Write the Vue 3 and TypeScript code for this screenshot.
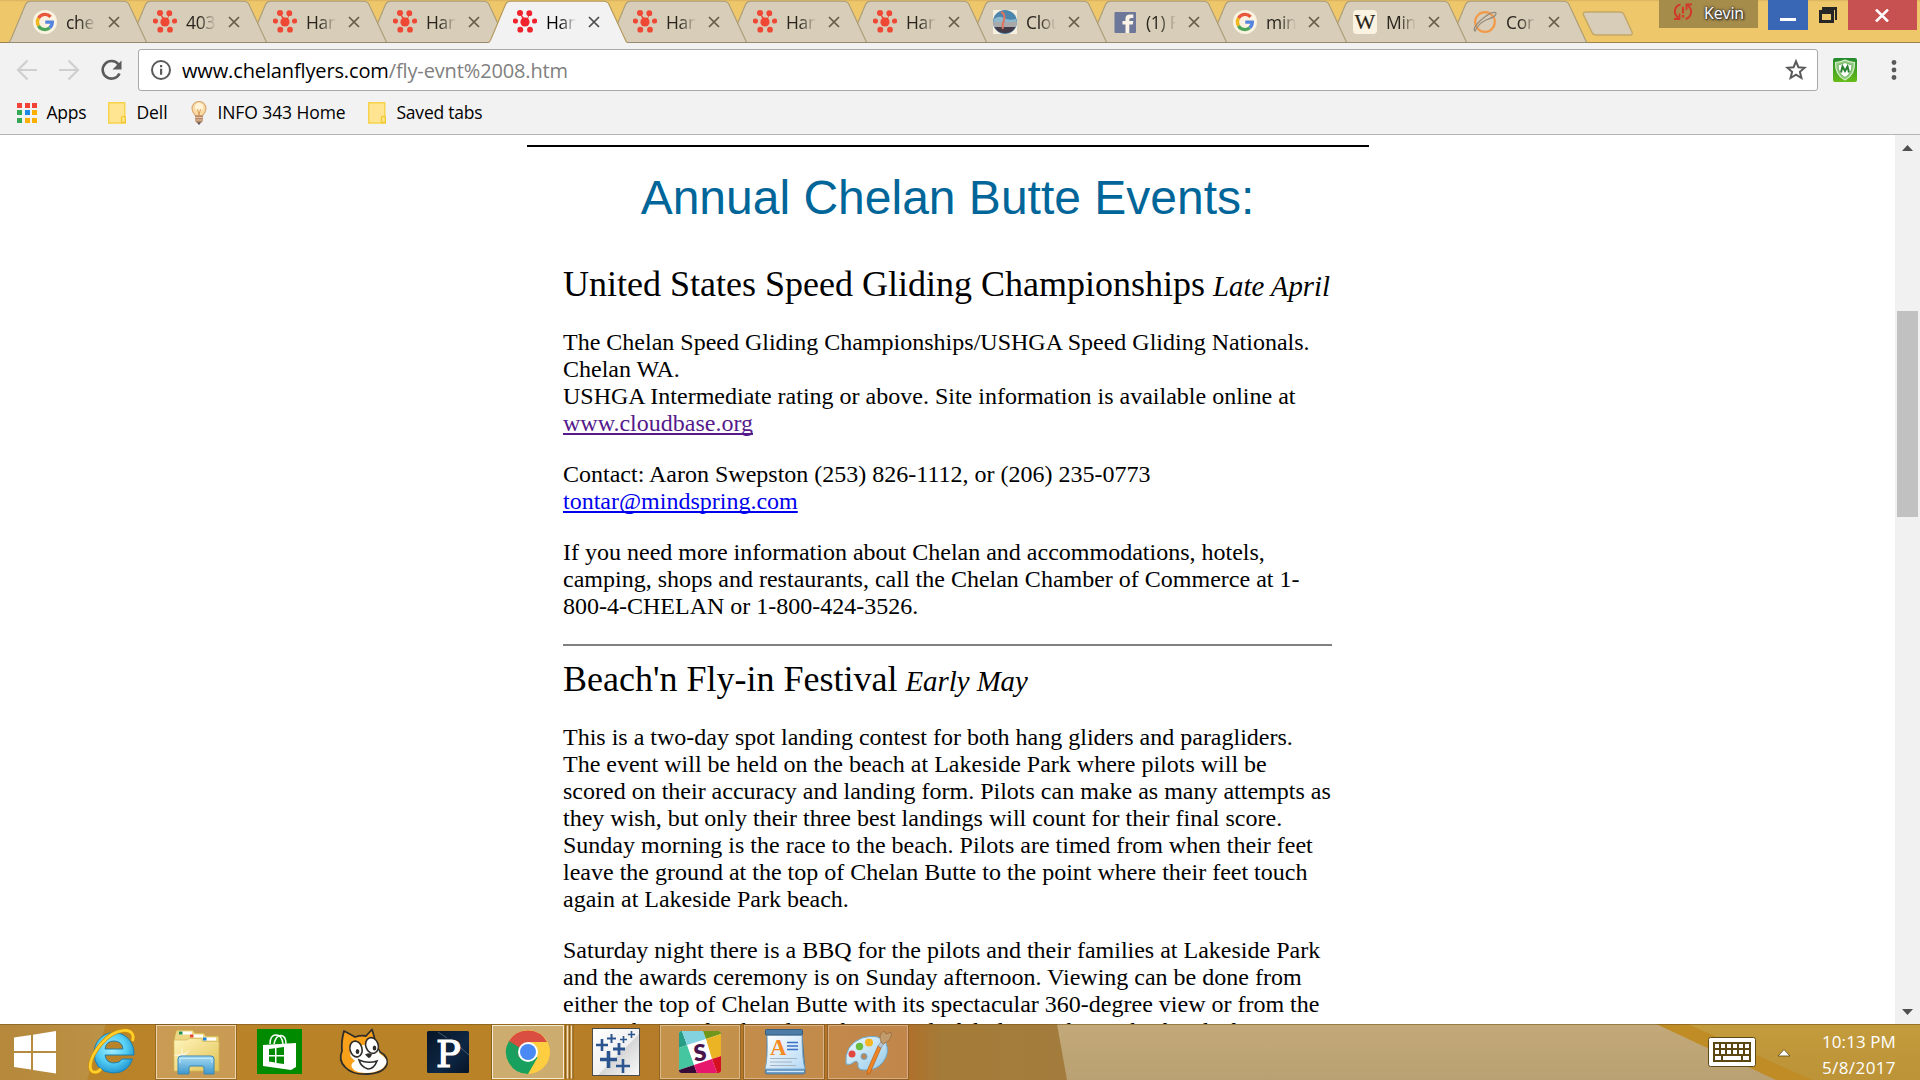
<script setup lang="ts">
import type { Directive } from 'vue'

interface Tab {
  title: string
  icon: 'google' | 'burst' | 'cloud' | 'facebook' | 'wiki' | 'planet'
  active?: boolean
}

const tabs: Tab[] = [
  { title: 'che', icon: 'google' },
  { title: '403', icon: 'burst' },
  { title: 'Han', icon: 'burst' },
  { title: 'Han', icon: 'burst' },
  { title: 'Han', icon: 'burst', active: true },
  { title: 'Han', icon: 'burst' },
  { title: 'Han', icon: 'burst' },
  { title: 'Han', icon: 'burst' },
  { title: 'Clou', icon: 'cloud' },
  { title: '(1) F', icon: 'facebook' },
  { title: 'min', icon: 'google' },
  { title: 'Min', icon: 'wiki' },
  { title: 'Cor', icon: 'planet' },
]

const appDots = ['#f44336', '#f44336', '#f44336', '#34a853', '#1e88e5', '#fbb003', '#34a853', '#fbb003', '#fbb003']

const sparks = [
  { x: 28, y: 21, r: 6, w: 2.6 },
  { x: 37.5, y: 14.5, r: 4.5, w: 2 },
  { x: 49.5, y: 15.5, r: 3.5, w: 1.6 },
  { x: 57.5, y: 10.5, r: 3.6, w: 1.6 },
  { x: 45, y: 25, r: 6, w: 2.8 },
  { x: 34.5, y: 35.5, r: 8.5, w: 3.6 },
  { x: 49, y: 42, r: 7, w: 2.6 },
]

// Tracks a label out (or in) so that it takes exactly the given width.
const vFit: Directive<HTMLElement, number> = {
  mounted(el, { value }) {
    const n = (el.textContent ?? '').length
    const w = el.getBoundingClientRect().width
    if (n > 0) el.style.letterSpacing = `${((value - w) / n).toFixed(3)}px`
  },
}
</script>

<template>
  <div class="screen">
    <header class="strip">
      <div class="tabs">
        <div v-for="(tab, i) in tabs" :key="i" class="tab" :class="{ active: tab.active }" :style="{ zIndex: tab.active ? 40 : 30 - i }">
          <svg class="shape" width="140" height="43" viewBox="0 0 140 43">
            <path d="M0.5 43 C2 42 2.5 40 3.5 38 L17.5 4.5 Q19 1 22 1 H116 Q119.500 1 121 4.500 L137 39 Q138 42 139.500 43 Z" :fill="tab.active ? '#f2f2f2' : '#d7cdb8'" />
            <path d="M0.5 42.500 C2 42 2.500 40 3.500 38 L17.500 4.500 Q19 1.300 22 1.300 H116 Q119.500 1.300 121 4.500 L137 39 Q138 42 139.500 42.500" fill="none" :stroke="tab.active ? '#b49758' : '#aa9c78'" stroke-width="1.100" />
            <path v-if="!tab.active" d="M0 42.500 H140" stroke="#97896d" />
          </svg>
          <svg class="fav" width="24" height="24" viewBox="0 0 24 24">
            <g v-if="tab.icon === 'google'">
              <circle cx="12" cy="12" r="12" fill="#fbf3e2" />
              <g fill="none" stroke-width="3.300">
                <path d="M17.600 6.800 A7.500 7.500 0 0 0 5.500 8.200" stroke="#e8573c" />
                <path d="M5.500 8.200 A7.500 7.500 0 0 0 5.500 15.800" stroke="#f2b51d" />
                <path d="M5.500 15.800 A7.500 7.500 0 0 0 16.800 17.800" stroke="#4ba657" />
                <path d="M16.800 17.800 A7.500 7.500 0 0 0 19.300 12.100 H12.300" stroke="#5484dc" />
              </g>
            </g>
            <g v-else-if="tab.icon === 'burst'" :fill="tab.active ? '#f0222b' : '#f04634'">
              <circle cx="12" cy="12" r="4.600" />
              <path d="M6 2 L10 10 L12 9 Z M12 12 L17 3 L14 12 Z" />
              <circle cx="7" cy="3" r="3" /><circle cx="16.300" cy="3.200" r="2.900" />
              <circle cx="2.400" cy="11" r="2.600" /><circle cx="21.600" cy="11" r="2.600" />
              <circle cx="7.300" cy="19.700" r="2.900" /><circle cx="17" cy="19.700" r="2.900" />
            </g>
            <g v-else-if="tab.icon === 'cloud'">
              <rect width="24" height="24" fill="#f7efdf" />
              <circle cx="12" cy="12" r="12" fill="#4d86ad" />
              <path d="M1 9 Q6 5 11 8 T23 9 L24 13 H0Z" fill="#8fb7cb" />
              <path d="M0 12 H24 A12 12 0 0 1 22.500 17 H1.500 A12 12 0 0 1 0 12Z" fill="#a9a9ac" />
              <path d="M1.500 17 H22.500 A12 12 0 0 1 1.500 17Z" fill="#443b49" />
              <path d="M8 2 Q13 4 11 10 T10 19" fill="none" stroke="#e0715c" stroke-width="2" />
            </g>
            <g v-else-if="tab.icon === 'facebook'">
              <rect x="1.500" y="2" width="21.500" height="21" rx="1" fill="#6d7799" />
              <path d="M12.500 23 V14.500 H9.500 V11 H12.500 V8.500 Q12.500 4.500 17 4.500 H20.300 V8 H18 Q16.300 8 16.300 9.500 V11 H20.300 L19.800 14.500 H16.300 V23Z" fill="#fbf4e6" />
            </g>
            <g v-else-if="tab.icon === 'wiki'">
              <rect width="24" height="24" rx="4" fill="#fbf3e2" />
              <text x="12" y="19" text-anchor="middle" class="wiki-w">W</text>
            </g>
            <g v-else fill="none">
              <circle cx="12" cy="12" r="9.800" stroke="#f2994a" stroke-width="2.200" />
              <path d="M2 21 Q-1 18 8 10 Q18 1 22.500 2.500 Q25 6 13 10 Q5 14 2 21Z" stroke="#978c7c" stroke-width="1.300" />
            </g>
          </svg>
          <span class="tab-title">{{ tab.title }}</span>
          <svg class="close" width="12" height="12" viewBox="0 0 12 12"><path d="M1 1 L11 11 M11 1 L1 11" fill="none" :stroke="tab.active ? '#4c4c4c' : '#675d47'" stroke-width="1.700" /></svg>
        </div>
      </div>
      <svg class="new-tab" width="52" height="26" viewBox="0 0 52 26">
        <path d="M4 2 H38 Q41 2 42 4.500 L50 22 Q51 25 48 25 H14 Q11 25 10 22.500 L1.500 5 Q0.500 2 4 2Z" fill="#d7cdb8" stroke="#c4a868" stroke-width="1.500" />
      </svg>
      <div class="controls">
        <div class="user">
          <svg width="20" height="18" viewBox="0 0 20 18" fill="none" stroke="#d2392a" stroke-width="2">
            <path d="M7.500 1.500 C1 3 0 11 5.500 15 M12.500 16 C19 14 20 6 14.500 2.500" />
            <path d="M6.500 10.500 V16 H1 M13.500 7 V1.500 H19" stroke-width="1.800" />
            <path d="M10 4 V10.500 M10 12 V14.500" stroke-width="2.200" />
          </svg>
          <span v-fit="40">Kevin</span>
        </div>
        <div class="min"><i></i></div>
        <svg class="restore" width="40" height="30" viewBox="0 0 40 30"><path d="M14 7 H29 V20 H27 V10 H14Z M11 10 H26 V23 H11Z M14 14 V20 H23 V14Z" fill="#262626" fill-rule="evenodd" /></svg>
        <div class="x"><svg width="14" height="13" viewBox="0 0 14 13"><path d="M1 .500 L13 12.500 M13 .500 L1 12.500" stroke="#fff" stroke-width="2.500" /></svg></div>
      </div>
    </header>

    <div class="toolbar">
      <svg class="nav" width="138" height="56" viewBox="0 0 138 56" fill="none">
        <path d="M37 27 H18.500 M27.500 17.500 L18 27 L27.500 36.500" stroke="#cfcfcf" stroke-width="2.200" />
        <path d="M59 27 H77.500 M68.500 17.500 L78 27 L68.500 36.500" stroke="#cfcfcf" stroke-width="2.200" />
        <path d="M118.500 21.500 A8.800 8.800 0 1 0 119.500 30.500" stroke="#5a5a5a" stroke-width="2.600" />
        <path d="M121.500 17.500 V26.500 H112.500 Z" fill="#5a5a5a" />
      </svg>
      <div class="omnibox">
        <svg class="info" width="20" height="20" viewBox="0 0 20 20"><circle cx="10" cy="10" r="9" fill="none" stroke="#5a5a5a" stroke-width="2" /><path d="M9 8.700 h2.200 v6 h-2.200z M9 5 h2.200 v2.300 h-2.200z" fill="#5a5a5a" /></svg>
        <span v-fit="386" class="url">www.chelanflyers.com<span>/fly-evnt%2008.htm</span></span>
        <svg class="star" width="22" height="22" viewBox="0 0 22 22"><path d="M11 2.300 L13.400 8.200 L19.700 8.700 L14.900 12.800 L16.400 19 L11 15.700 L5.600 19 L7.100 12.800 L2.300 8.700 L8.600 8.200Z" fill="none" stroke="#5a5a5a" stroke-width="2" /></svg>
      </div>
      <svg class="shield" width="24" height="24" viewBox="0 0 24 24">
        <defs><linearGradient id="sg" x2="0" y2="1"><stop stop-color="#238a2e" /><stop offset="1" stop-color="#66bd18" /></linearGradient></defs>
        <rect width="24" height="24" rx="2" fill="url(#sg)" />
        <path d="M2.500 4.500 Q8 4 12 2 Q16 4 21.500 4.500 Q22 17 12 22 Q2 17 2.500 4.500Z" fill="#8ecb7c" stroke="#d9edce" stroke-width="1.200" />
        <path d="M5 7 Q9 6 12 4.500 Q15 6 19 7 Q19 15.500 12 19.500 Q5 15.500 5 7Z" fill="#fff" stroke="#76b969" />
        <path d="M8 14.500 L9.500 8.500 L12 13 L14.500 8.500 L16 14.500" fill="none" stroke="#287f2d" stroke-width="2" />
      </svg>
      <svg class="dots" width="6" height="20" viewBox="0 0 6 20" fill="#5a5a5a"><circle cx="3" cy="2.500" r="2.400" /><circle cx="3" cy="10" r="2.400" /><circle cx="3" cy="17.500" r="2.400" /></svg>
    </div>

    <div class="bookmarks">
      <div class="bm apps">
        <div class="grid"><i v-for="(c, i) in appDots" :key="i" :style="{ background: c }"></i></div>
        <span v-fit="40">Apps</span>
      </div>
      <div class="bm dell">
        <svg width="18" height="22" viewBox="0 0 18 22"><path d="M.700 .700 H16.800 V15 H17.500 V21 H.700Z" fill="#ffe591" stroke="#f6d34b" stroke-width="1.400" /><path d="M13.500 20.500 V16 Q13.500 14.300 15.500 14.300 Q17.300 14.300 17.300 16 V20.500Z" fill="#ffe591" stroke="#f2c72f" stroke-width="1.300" /></svg>
        <span v-fit="31">Dell</span>
      </div>
      <div class="bm info343">
        <svg width="16" height="24" viewBox="0 0 16 24"><path d="M4.500 14.500 Q1 11 1 7.500 A7 7 0 0 1 15 7.500 Q15 11 11.500 14.500Z" fill="#fbdca6" stroke="#d9a972" stroke-width="1.200" /><ellipse cx="8" cy="6" rx="4" ry="4" fill="#fff4d8" /><path d="M6.500 8 L8 14 L9.500 8" fill="none" stroke="#d89c5a" /><path d="M4 14.500 H12 V20 L10 22 H6 L4 20Z" fill="#b98a69" /><path d="M4 16.500 H12 M4 19 H12" stroke="#e4c3a4" /><path d="M6 21.500 H10 L8 24Z" fill="#555" /></svg>
        <span v-fit="128">INFO 343 Home</span>
      </div>
      <div class="bm saved">
        <svg width="18" height="22" viewBox="0 0 18 22"><path d="M.700 .700 H16.800 V15 H17.500 V21 H.700Z" fill="#ffe591" stroke="#f6d34b" stroke-width="1.400" /><path d="M13.500 20.500 V16 Q13.500 14.300 15.500 14.300 Q17.300 14.300 17.300 16 V20.500Z" fill="#ffe591" stroke="#f2c72f" stroke-width="1.300" /></svg>
        <span v-fit="86">Saved tabs</span>
      </div>
    </div>

    <div class="viewport">
      <main class="page">
        <div class="rule"></div>
        <h1>Annual Chelan Butte Events:</h1>
        <article>
          <h2>United States Speed Gliding Championships <em>Late April</em></h2>
          <p>The Chelan Speed Gliding Championships/USHGA Speed Gliding Nationals.<br>Chelan WA.<br>USHGA Intermediate rating or above. Site information is available online at <a class="visited">www.cloudbase.org</a></p>
          <p>Contact: Aaron Swepston (253) 826-1112, or (206) 235-0773<br><a>tontar@mindspring.com</a></p>
          <p>If you need more information about Chelan and accommodations, hotels, camping, shops and restaurants, call the Chelan Chamber of Commerce at 1-<wbr>800-4-CHELAN or 1-800-424-3526.</p>
          <hr>
          <h2>Beach'n Fly-in Festival <em>Early May</em></h2>
          <p>This is a two-day spot landing contest for both hang gliders and paragliders. The event will be held on the beach at Lakeside Park where pilots will be scored on their accuracy and landing form. Pilots can make as many attempts as they wish, but only their three best landings will count for their final score. Sunday morning is the race to the beach. Pilots are timed from when their feet leave the ground at the top of Chelan Butte to the point where their feet touch again at Lakeside Park beach.</p>
          <p>Saturday night there is a BBQ for the pilots and their families at Lakeside Park and the awards ceremony is on Sunday afternoon. Viewing can be done from either the top of Chelan Butte with its spectacular 360-degree view or from the green shores of Lakeside Park, a wonderful place to bring the family for</p>
        </article>
      </main>
      <div class="scroll">
        <svg width="25" height="25" viewBox="0 0 25 25"><path d="M7 16 L12.500 10 L18 16Z" fill="#505050" /></svg>
        <div class="thumb"></div>
        <svg class="down" width="25" height="25" viewBox="0 0 25 25"><path d="M7 10 L12.500 16 L18 10Z" fill="#505050" /></svg>
      </div>
    </div>

    <footer class="taskbar">
      <svg class="wall" width="1920" height="56" viewBox="0 0 1920 56" preserveAspectRatio="none">
        <defs>
          <linearGradient id="w1"><stop stop-color="#b5883b" /><stop offset="1" stop-color="#bc9246" /></linearGradient>
          <linearGradient id="w2"><stop stop-color="#b9832b" /><stop offset=".450" stop-color="#b98226" /><stop offset=".800" stop-color="#b1742b" /><stop offset=".850" stop-color="#af712b" /><stop offset=".880" stop-color="#a47b38" /><stop offset="1" stop-color="#a37c3d" /></linearGradient>
          <linearGradient id="w3" x2="0" y2="1"><stop stop-color="#c3a979" /><stop offset="1" stop-color="#b9a173" /></linearGradient>
          <linearGradient id="w4" x2="0" y2="1"><stop stop-color="#c39c3d" /><stop offset="1" stop-color="#bc9337" /></linearGradient>
        </defs>
        <rect width="1070" height="56" fill="url(#w2)" />
        <path d="M0 0 H106 Q96 30 87 56 H0Z" fill="url(#w1)" />
        <path d="M1057 0 H1920 V56 H1067Z" fill="url(#w3)" />
        <path d="M1656 0 H1920 V56 H1776Z" fill="#c08c26" />
        <path d="M1688 0 H1920 V56 H1812Z" fill="url(#w4)" />
        <path d="M0 .500 H1920" stroke="#735217" stroke-opacity=".55" />
      </svg>
      <svg class="start" width="70" height="56" viewBox="0 0 70 56" fill="#fff"><path d="M14 13.500 L31 11 V27 H14Z M33 10.700 L56 7 V27 H33Z M14 29 H31 V45.500 L14 43Z M33 29 H56 V49.500 L33 46Z" /></svg>

      <svg class="slot" viewBox="0 0 84 56">
        <defs><radialGradient id="ie" cx=".45" cy=".4" r=".6"><stop stop-color="#a5efff" /><stop offset=".6" stop-color="#53cdf4" /><stop offset="1" stop-color="#2597d0" /></radialGradient></defs>
        <path d="M24 28 A20 21 0 1 1 64 31 H35 Q36 39 44 39 Q50 39 52 35 H62.500 Q58 49 43 49 Q24 48 24 28Z M35 25 H53 Q52 17 44 17 Q36 17 35 25Z" fill="url(#ie)" stroke="#1e7eac" fill-rule="evenodd" />
        <path d="M62.500 17 C67 2 45 3 31 20 C19 34 16 50 27 48 Q29 47 31 45" fill="none" stroke="#d39000" stroke-width="4" />
        <path d="M62.500 17 C67 2 45 3 31 20 C19 34 16 50 27 48 Q29 47 31 45" fill="none" stroke="#ffd02e" stroke-width="2.700" />
      </svg>

      <svg class="slot" viewBox="0 0 84 56">
        <rect x="2.500" y="1.500" width="79" height="53" fill="#e0bd90" fill-opacity=".42" stroke="#ebd3ae" />
        <rect x="1.500" y=".500" width="81" height="55" fill="none" stroke="#765117" stroke-opacity=".5" />
        <defs><linearGradient id="fo" x2="1" y2="1"><stop stop-color="#fff5bd" /><stop offset="1" stop-color="#e2c253" /></linearGradient><linearGradient id="bl" x2="0" y2="1"><stop stop-color="#a8dcf5" /><stop offset="1" stop-color="#3d97cd" /></linearGradient></defs>
        <path d="M22 7 Q22 6 24 6 H39 L41 9 H50 L52 12 H64 Q65 12 65 15 V47 H20 V15Z" fill="#eed783" stroke="#c6a443" />
        <path d="M25 7.500 H38 V10.500 H25Z M36 10.500 H49 V13.500 H36Z M49 13.500 H62 V16.500 H49Z" fill="#fff" />
        <rect x="25" y="7.500" width="3.500" height="3" fill="#209050" /><rect x="36" y="10.500" width="3.500" height="3" fill="#e54a2b" /><rect x="49" y="13.500" width="3.500" height="3" fill="#1d83d4" />
        <path d="M20 16 H33 L35 14.500 H47 L49 17.500 H65 V47 H20Z" fill="url(#fo)" stroke="#d2b65a" stroke-width=".700" />
        <path d="M28 22 L29 30 L36 26 L30.500 32 L35 37 L29 34 L24 40 L27 33 L19 31 L27 30Z" fill="#fff" fill-opacity=".6" />
        <path d="M24 50 V35 Q24 32 27 32 H57 Q60 32 60 35 V50 H50 V44 Q50 42 48 42 H37 Q35 42 35 44 V50Z" fill="url(#bl)" stroke="#3b88b5" />
        <path d="M26 39 V34.500 H58 V39" fill="none" stroke="#c9edfb" stroke-opacity=".8" />
      </svg>

      <svg class="slot" viewBox="0 0 84 56">
        <rect x="19" y="5" width="45" height="45" fill="#008a00" />
        <path d="M25 21 L58 19 V43 L53 46 L25 42Z" fill="#fff" />
        <path d="M32 20 Q32 11 38 11 Q44 11 45 20 M36 20 Q38 11 43 11.500 Q48 12 48 20" fill="none" stroke="#fff" stroke-width="1.500" />
        <path d="M31 25 L37 24.300 V31 H31Z M38.500 24 L46 23 V31 H38.500Z M31 32.500 H37 V38.500 L31 37.500Z M38.500 32.500 H46 V40 L38.500 39Z" fill="#008a00" />
      </svg>

      <svg class="slot" viewBox="0 0 84 56">
        <path d="M22 7 Q28 10 33 13 Q39 11 44 12 L50 5.500 Q53 13 53 20 Q56 24 58 28 Q66 32 65 40 Q62 49 46 50 Q30 51 23 43 Q16 36 20 27 Q19 18 22 7Z" fill="#f9a01b" stroke="#302e2a" stroke-width="1.800" stroke-linejoin="round" />
        <path d="M29 33 Q27 28 30 24 L45 20 L56 25 Q57 30 61 32 Q66 36 64 40 Q60 48 46 49 Q34 49 31 45 Q27 40 33 37 Z" fill="#fff" />
        <ellipse cx="34" cy="25" rx="6" ry="8" transform="rotate(-15 34 25)" fill="#fff" stroke="#302e2a" stroke-width="1.600" />
        <ellipse cx="50" cy="21.500" rx="6.200" ry="8" transform="rotate(-20 50 21.500)" fill="#fff" stroke="#302e2a" stroke-width="1.600" />
        <ellipse cx="35.500" cy="27.500" rx="1.800" ry="2.500" fill="#302e2a" /><ellipse cx="52.500" cy="24" rx="1.800" ry="2.500" fill="#302e2a" />
        <path d="M43 30.500 Q47 28.500 50 30 Q49 34 46.500 34Z" fill="#302e2a" /><path d="M37 36 Q46 40 55 37 Q52 45 46 45 Q39 43 37 36Z" fill="#fff" stroke="#302e2a" stroke-width="1.600" />
      </svg>

      <svg class="slot" viewBox="0 0 84 56">
        <defs><linearGradient id="pr" x2="1" y2="1"><stop stop-color="#071526" /><stop offset=".6" stop-color="#0d2745" /><stop offset="1" stop-color="#061426" /></linearGradient></defs>
        <rect x="21" y="7" width="42" height="42" rx="1.500" fill="url(#pr)" />
        <path d="M32 8 L41 14 M45 15 L55 24 L63 31" fill="none" stroke="#6a8298" stroke-opacity=".6" />
        <text x="42.500" y="43" text-anchor="middle" class="proc-p">P</text>
      </svg>

      <svg class="slot" viewBox="0 0 84 56">
        <rect x="2.500" y="1.500" width="71" height="53" fill="#d8c69c" fill-opacity=".62" stroke="#f6ead0" />
        <path d="M77.500 1.500 V54.500 M81.500 1.500 V54.500" stroke="#f0dfbb" stroke-width="1.500" /><path d="M75.500 1 V55 M79.500 1 V55 M1.500 .500 V55.500 M83 .500 V55.500" stroke="#765117" stroke-opacity=".7" />
        <circle cx="38" cy="28" r="22" fill="#ffcd40" />
        <path d="M38 28 L18.900 17 A22 22 0 0 0 38 50 L47.500 33.500Z" fill="#18a05e" />
        <path d="M18.900 17 A22 22 0 0 1 57.100 18 L38 18 L28.500 33.500Z" fill="#da4d41" />
        <path d="M19 17 L28.500 33.500 L30 24Z" fill="#18a05e" />
        <circle cx="38" cy="28" r="10" fill="#fff" /><circle cx="38" cy="28" r="8" fill="#4a8af4" />
      </svg>

      <svg class="slot" viewBox="0 0 84 56">
        <defs><linearGradient id="tb" x2="1" y2="1"><stop stop-color="#fff" /><stop offset=".55" stop-color="#f0f0f0" /><stop offset=".56" stop-color="#d6d6d6" /><stop offset="1" stop-color="#fafafa" /></linearGradient></defs>
        <rect x="18.500" y="4.500" width="47" height="47" fill="url(#tb)" stroke="#4c4c4c" />
        <path v-for="(s, i) in sparks" :key="i" :d="`M${s.x - s.r} ${s.y} h${2 * s.r} M${s.x} ${s.y - s.r} v${2 * s.r}`" stroke="#2c5590" :stroke-width="s.w" />
      </svg>

      <svg class="slot" viewBox="0 0 84 56">
        <rect x="2.500" y="1.500" width="79" height="53" fill="#d9b27a" fill-opacity=".42" stroke="#d9b98a" />
        <rect x="1.500" y=".500" width="81" height="55" fill="none" stroke="#765117" stroke-opacity=".5" />
        <defs><clipPath id="sc"><rect x="21" y="7" width="42" height="42" rx="2.500" /></clipPath></defs>
        <g clip-path="url(#sc)">
          <rect x="21" y="7" width="42" height="42" fill="#fff" />
          <path d="M21 7 H24 L29 21 L21 24Z" fill="#269d84" />
          <path d="M24 7 H45 L48 15 L29 21Z" fill="#83d2e0" /><path d="M45 7 H63 V10 L48 15Z" fill="#70961b" />
          <path d="M48 15 L63 10 V32 L54 35Z" fill="#ebb424" /><path d="M21 24 L29 21 L36 41 L21 46Z" fill="#45c5a0" />
          <path d="M21 46 L36 41 L39 49 H21Z" fill="#380a37" /><path d="M36 41 L54 35 L59 49 H39Z" fill="#e6176d" /><path d="M54 35 L63 32 V49 H59Z" fill="#d51022" />
        </g>
        <text x="42" y="37" text-anchor="middle" transform="rotate(-6 42 29)" class="slack-s">S</text>
      </svg>

      <svg class="slot" viewBox="0 0 84 56">
        <rect x="2.500" y="1.500" width="79" height="53" fill="#d9aa78" fill-opacity=".42" stroke="#d9b18a" />
        <rect x="1.500" y=".500" width="81" height="55" fill="none" stroke="#765117" stroke-opacity=".5" />
        <defs><linearGradient id="wp" x2="1" y2="1"><stop stop-color="#fff" /><stop offset="1" stop-color="#b4d9f5" /></linearGradient></defs>
        <path d="M25 11 H60 L63 46 V49 Q62 50 60 50 H25 Q23 50 23 48 L25 43Z" fill="#6f9fc6" stroke="#436f96" stroke-width=".800" />
        <path d="M25 11 H60 Q60 35 63 45 H23 Q26 35 25 11Z" fill="url(#wp)" stroke="#6c9fc8" stroke-width=".800" />
        <rect x="23.500" y="5.500" width="37" height="5.500" rx="1" fill="#4d7ca6" stroke="#355d83" />
        <text x="28" y="30.500" class="wp-a">A</text>
        <path d="M45 18.500 H56 M45 22 H56 M45 25.500 H56" stroke="#3b70c7" stroke-width="1.700" />
        <path d="M28 34.500 H55 M28 38 H50 M28 41.500 H54" stroke="#a7b4bf" stroke-width="1.200" /><path d="M25 47.500 H62" stroke="#d3e9fa" stroke-width="1.200" />
      </svg>

      <svg class="slot" viewBox="0 0 84 56">
        <rect x="2.500" y="1.500" width="79" height="53" fill="#d9a578" fill-opacity=".42" stroke="#d9ab85" />
        <rect x="1.500" y=".500" width="81" height="55" fill="none" stroke="#765117" stroke-opacity=".5" />
        <defs><linearGradient id="pa" x2="1" y2="1"><stop stop-color="#f1fbff" /><stop offset="1" stop-color="#92c9e8" /></linearGradient></defs>
        <path d="M20 40 Q18 21 36 14 Q53 9 60 19 Q64 29 57 38 Q50 47 38 46 Q31 46 32 40 Q32 36 28 38 Q24 42 20 40Z" fill="url(#pa)" stroke="#6fa7c6" />
        <circle cx="38" cy="32.500" r="3" fill="#b98757" stroke="#6fa7c6" />
        <circle cx="26" cy="30" r="3.500" fill="#e2483f" /><circle cx="33.500" cy="22.500" r="3.700" fill="#69bd3e" /><circle cx="43" cy="18.500" r="4" fill="#f6b623" />
        <path d="M52 22 L55 24 L44 49 L41.500 50.500 L41 47Z" fill="#ee8526" stroke="#b75d11" stroke-width=".700" /><path d="M52 22 L55 18 L57.500 20 L55 24Z" fill="#bcc5cc" stroke="#77808a" stroke-width=".600" /><path d="M55 18 Q52 10 58 7 L60 10 L65 8 Q67 15 57.500 20Z" fill="#c29b6c" stroke="#95683d" stroke-width=".700" />
      </svg>

      <div class="tray">
        <svg width="48" height="30" viewBox="0 0 48 30"><rect x=".500" y=".500" width="47" height="29" rx="2" fill="#fff" stroke="#5e4a17" /><rect x="5" y="5" width="38" height="20" fill="#5c4713" /><path d="M7 7h4v4h-4z M13 7h4v4h-4z M19 7h4v4h-4z M25 7h4v4h-4z M31 7h4v4h-4z M37 7h4v4h-4z M7 13h4v4h-4z M13 13h4v4h-4z M19 13h4v4h-4z M25 13h4v4h-4z M31 13h4v4h-4z M37 13h4v4h-4z M7 19h6v4h-6z M15 19h18v4h-18z M35 19h6v4h-6z" fill="#fff" /></svg>
        <svg class="up" width="14" height="10" viewBox="0 0 14 10"><path d="M1 8 L7 1.500 L13 8Z" fill="#fff" stroke="#68521c" stroke-width=".900" /></svg>
        <div class="clock"><div><span v-fit="74">10:13 PM</span></div><div><span v-fit="74">5/8/2017</span></div></div>
      </div>
    </footer>
  </div>
</template>

<style>
html, body { margin: 0; background: #fff; overflow: hidden; }
</style>

<style scoped>
.screen { width: 1920px; height: 1080px; display: flex; flex-direction: column; overflow: hidden; font-family: "Open Sans", "Noto Sans", sans-serif; color: #111; }
svg { display: block; flex: none; }
.strip { height: 43px; flex: none; background: linear-gradient(#d8b35e 0, #efc76b 2px, #efc76b 100%); box-shadow: inset 0 -1px #9c8350; display: flex; align-items: flex-start; }
.tabs { display: flex; padding-left: 8px; isolation: isolate; }
.tab { width: 120px; height: 43px; position: relative; display: flex; align-items: center; }
.shape { position: absolute; left: 0; top: 0; }
.fav { margin: 0 0 0 25px; position: relative; }
.tab-title { position: relative; width: 30px; margin-left: 9px; overflow: hidden; white-space: nowrap; font-size: 17.5px; line-height: 24px; letter-spacing: -.3px; color: #2a261e; mask-image: linear-gradient(90deg, #000 45%, transparent); }
.tab.active .tab-title { color: #000; }
.close { position: relative; margin: 1px 0 0 12px; }
.wiki-w { font: 22px "Liberation Serif", serif; fill: #2a2417; stroke: #2a2417; stroke-width: .2px; }
.new-tab { margin: 10px 0 0 14px; }
.controls { display: flex; flex: 1; }
.user { width: 99px; height: 28px; margin-left: 25px; background: #a68c4b; display: flex; align-items: center; color: #fff; font-size: 16px; font-weight: 500; text-shadow: 0 0 2px #333, 0 0 3px #333, 1px 1px 2px #222; }
.user svg { margin: -4px 11px 0 14px; }
.user span { margin-top: -2px; white-space: nowrap; }
.min { width: 40px; height: 30px; margin-left: 10px; background: #3966b5; }
.min i { display: block; width: 16px; height: 3px; margin: 18px 0 0 12px; background: #fff; }
.x { width: 69px; height: 30px; background: #c75050; display: flex; align-items: center; justify-content: center; }
.x svg { margin-right: 1px; }
.toolbar { height: 52px; flex: none; background: #f2f2f2; display: flex; align-items: flex-start; }
.nav { margin-bottom: -4px; }
.omnibox { width: 1678px; height: 40px; margin-top: 6px; border: 1px solid #a9a9a9; border-radius: 3px; background: #fff; display: flex; align-items: center; }
.info { margin-left: 12px; }
.url { margin: 2px 0 0 11px; font-size: 20px; color: #000; white-space: nowrap; line-height: 38px; }
.url span { color: #808080; }
.star { margin-left: auto; margin-right: 10px; }
.shield { margin: 15px 0 0 15px; }
.dots { margin: 17px 0 0 34px; }
.bookmarks { height: 39px; flex: none; background: #f2f2f2; border-bottom: 1px solid #b6b4b6; display: flex; align-items: center; font-size: 17.5px; color: #000; }
.bm { display: flex; align-items: center; height: 35px; margin-bottom: 4px; white-space: nowrap; }
.bm > span { margin: -2px .5px 0 -.5px; }
.grid { display: grid; grid-template-columns: repeat(3, 5px); gap: 2.500px; margin: 0 10px 0 17px; }
.grid i { height: 5px; }
.dell { margin-left: 21px; }
.dell svg, .saved svg { margin-right: 11px; }
.info343 { margin-left: 23px; }
.info343 svg { margin-right: 11px; }
.saved { margin-left: 22px; }
.viewport { flex: 1; min-height: 0; display: flex; overflow: hidden; background: #fff; }
.page { flex: 1; display: flex; flex-direction: column; align-items: center; overflow: hidden; font-family: "Liberation Serif", serif; font-size: 24px; line-height: 27px; color: #000; }
.rule { width: 842px; height: 2px; flex: none; margin-top: 10px; background: #000; }
h1 { margin: 23px 0 0; font: 400 48px/56px "Liberation Sans", sans-serif; color: #069; white-space: nowrap; }
article { width: 769px; margin-top: 38px; }
h2 { font-size: 36px; font-weight: 400; line-height: 41px; height: 41px; margin: 0 0 24px; white-space: nowrap; }
h2 em { font-size: 28.8px; margin-left: -1px; }
p { margin: 0 0 24px; }
a { color: #00e; text-decoration: underline 2px; text-underline-offset: 2px; text-decoration-skip-ink: none; }
a.visited { color: #551a8b; }
hr { border: 0; height: 2px; background: #808080; margin: 0 0 13px; }
.scroll { width: 25px; flex: none; background: #f1f1f1; display: flex; flex-direction: column; }
.thumb { width: 21px; height: 206px; margin: 151px 0 0 2px; background: #c1c1c1; }
.down { margin-top: auto; }
.taskbar { height: 56px; flex: none; position: relative; display: flex; }
.wall { position: absolute; left: 0; top: 0; }
.start, .slot, .tray { position: relative; }
.slot { width: 84px; height: 56px; }
.proc-p { font: 37px "DejaVu Serif", serif; fill: #fff; stroke: #fff; stroke-width: 1.2px; }
.slack-s { font: 800 23px Lato, sans-serif; fill: #4a154b; }
.wp-a { font: bold 23px "Liberation Serif", serif; fill: #f58a25; }
.tray { margin-left: auto; margin-right: 23px; display: flex; align-items: flex-start; }
.tray > svg:first-child { margin-top: 13px; }
.up { margin: 24px 0 0 21px; }
.clock { margin: 5px 0 0 31px; width: 75px; color: #fff; font-size: 17px; line-height: 26px; white-space: nowrap; }
</style>
